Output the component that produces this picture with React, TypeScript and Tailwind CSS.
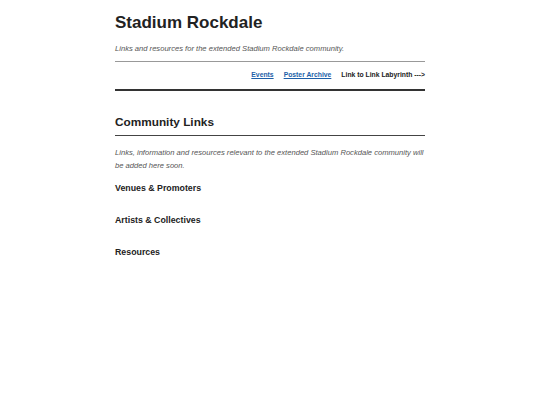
const sections = ["Venues & Promoters", "Artists & Collectives", "Resources"];

export default function App() {
  return (
    <div className="min-h-screen bg-white font-['Liberation_Sans',Arial,sans-serif] text-[#222]">
      <div className="mx-auto w-[310px] pt-[13px]">
        <header>
          <h1 className="text-[17px] font-bold leading-[20px]">Stadium Rockdale</h1>
          <p className="mt-[11px] text-[7.6px] italic leading-[10px] text-[#555]">
            Links and resources for the extended Stadium Rockdale community.
          </p>
          <div className="mt-[7px] h-px bg-[#999]" />
          <nav className="flex justify-end gap-[10px] py-[8px] text-[6.8px] font-bold leading-[9px]">
            <a href="#" className="text-[#1d5fa8] underline">Events</a>
            <a href="#" className="text-[#1d5fa8] underline">Poster Archive</a>
            <span className="text-[#222]">Link to Link Labyrinth ---&gt;</span>
          </nav>
          <div className="mt-[2px] h-[2px] bg-[#333]" />
        </header>

        <main className="pt-[24px]">
          <h2 className="text-[11.8px] font-bold leading-[14px]">Community Links</h2>
          <div className="mt-[6px] h-px bg-[#444]" />
          <p className="mt-[10px] text-[7.6px] italic leading-[13px] text-[#555]">
            Links, information and resources relevant to the extended Stadium Rockdale community will be added here soon.
          </p>
          <div className="mt-[11px] flex flex-col gap-[21px]">
            {sections.map((s) => (
              <h3 key={s} className="text-[8.8px] font-bold leading-[11px]">{s}</h3>
            ))}
          </div>
        </main>
      </div>
    </div>
  );
}
